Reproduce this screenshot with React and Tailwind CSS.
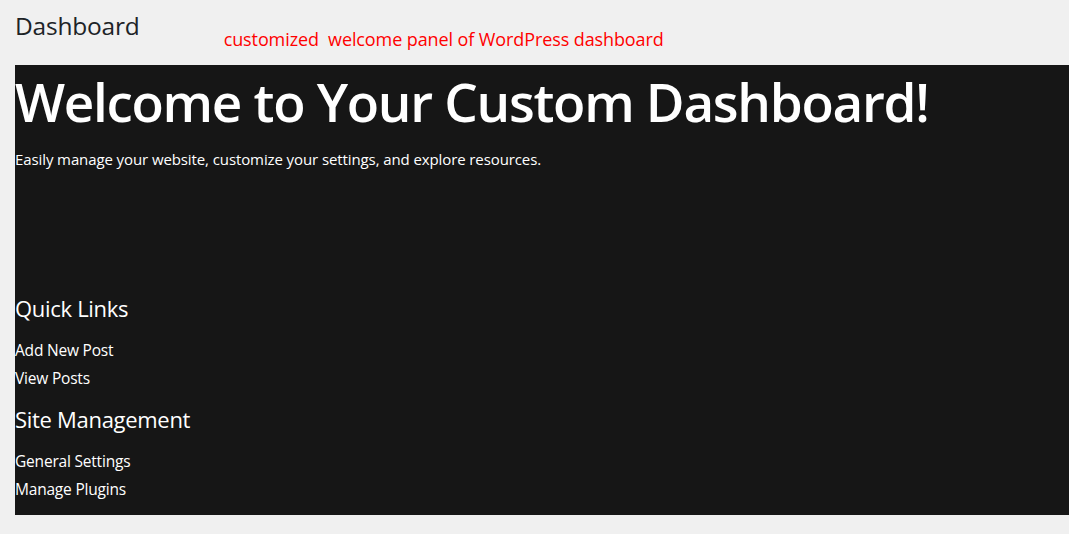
export default function App() {
  const font = { fontFamily: '"Open Sans", "Noto Sans", sans-serif' };
  return (
    <div className="min-h-[534px] w-[1069px] bg-[#f0f0f0] overflow-hidden" style={font}>
      <div className="flex items-start pl-[15px] h-[65px]">
        <h1 className="text-[24.5px] leading-[30px] mt-[11px] text-[#1d2327] font-normal tracking-[-0.2px]">Dashboard</h1>
        <div className="ml-[84px] mt-[27px] text-[18px] leading-[24px] text-[#ff0000] tracking-[-0.1px]">customized&nbsp; welcome panel of WordPress dashboard</div>
      </div>
      <div className="ml-[15px] h-[450px] bg-[#161616] text-white flex flex-col">
        <h2 className="text-[53px] leading-[70px] mt-[2px] font-semibold tracking-[-1.3px]">Welcome to Your Custom Dashboard!</h2>
        <p className="text-[15px] leading-[20px] mt-[12px] tracking-[-0.1px]">Easily manage your website, customize your settings, and explore resources.</p>
        <h3 className="text-[22px] leading-[28px] mt-[125px] tracking-[-0.3px]">Quick Links</h3>
        <div className="mt-[14px] flex flex-col text-[15.5px] leading-[28px] tracking-[-0.2px]">
          <span>Add New Post</span>
          <span>View Posts</span>
        </div>
        <h3 className="text-[22px] leading-[28px] mt-[13px] tracking-[-0.3px]">Site Management</h3>
        <div className="mt-[14px] flex flex-col text-[15.5px] leading-[28px] tracking-[-0.2px]">
          <span>General Settings</span>
          <span>Manage Plugins</span>
        </div>
      </div>
    </div>
  );
}
